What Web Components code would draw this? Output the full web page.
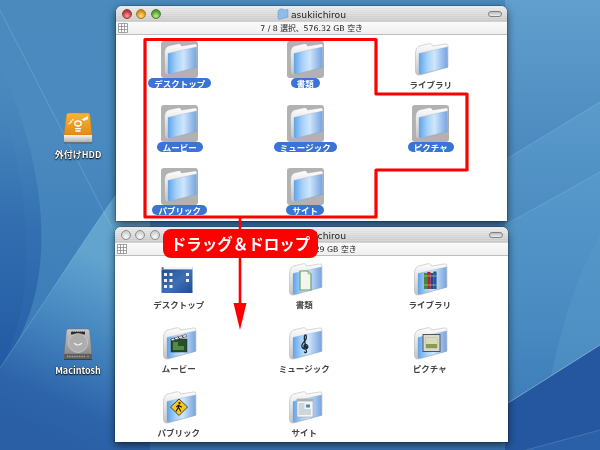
<!DOCTYPE html>
<html lang="ja"><head><meta charset="utf-8"><title>Finder</title>
<style>html,body{margin:0;padding:0;width:600px;height:450px;overflow:hidden;background:#3b79b5}</style></head>
<body>
<x-desktop>
  <x-volume slot="icons" kind="fw" label="外付けHDD" style="left:48px;top:112px"></x-volume>
  <x-volume slot="icons" kind="hd" label="Macintosh" style="left:48px;top:328px"></x-volume>
  <x-window slot="windows" active name="asukiichirou" status="7 / 8 選択、576.32 GB 空き" style="left:116px;top:6px;width:391px;height:215px;--pt:6px;--row:63.5px">
    <x-file selected label="デスクトップ"></x-file><x-file selected label="書類"></x-file><x-file label="ライブラリ"></x-file>
    <x-file selected label="ムービー"></x-file><x-file selected label="ミュージック"></x-file><x-file selected label="ピクチャ"></x-file>
    <x-file selected label="パブリック"></x-file><x-file selected label="サイト"></x-file>
  </x-window>
  <x-window slot="windows" name="asukiichirou" status="8 項目、576.29 GB 空き" style="left:115px;top:227px;width:393px;height:215px;--pt:5px;--row:64.2px">
    <x-file glyph="desktop" label="デスクトップ"></x-file><x-file glyph="doc" label="書類"></x-file><x-file glyph="books" label="ライブラリ"></x-file>
    <x-file glyph="movie" label="ムービー"></x-file><x-file glyph="clef" label="ミュージック"></x-file><x-file glyph="photo" label="ピクチャ"></x-file>
    <x-file glyph="sign" label="パブリック"></x-file><x-file glyph="web" label="サイト"></x-file>
  </x-window>
  <x-callout slot="over" text="ドラッグ＆ドロップ"></x-callout>
</x-desktop>
<script>
const CJK='"Noto Sans CJK JP","Noto Sans",sans-serif';
class XDesktop extends HTMLElement{connectedCallback(){this.attachShadow({mode:'open'}).innerHTML=`
<style>:host{display:block;position:relative;width:600px;height:450px;overflow:hidden;filter:blur(.3px)}
svg.w{display:block;position:absolute;inset:0}</style>
<svg class="w" width="600" height="450" viewBox="0 0 600 450">
<defs>
<linearGradient id="b" x1="0" y1="0" x2="0" y2="1"><stop offset="0" stop-color="#4a8abd"/><stop offset=".3" stop-color="#4a8abf"/><stop offset=".6" stop-color="#3f80ba"/><stop offset="1" stop-color="#3a76b4"/></linearGradient>
<linearGradient id="d" x1="0" y1="0" x2="0" y2="1"><stop offset="0" stop-color="#3d7ab4" stop-opacity="0"/><stop offset=".55" stop-color="#2e69ad"/><stop offset="1" stop-color="#2056a2"/></linearGradient>
<linearGradient id="l" gradientUnits="userSpaceOnUse" x1="125" y1="270" x2="50" y2="435"><stop offset="0" stop-color="#62a4ce"/><stop offset=".4" stop-color="#4687c0"/><stop offset=".8" stop-color="#2e65aa"/><stop offset="1" stop-color="#2a5fa6"/></linearGradient>
<linearGradient id="r0" x1="0" y1="0" x2="0" y2="1"><stop offset="0" stop-color="#619fce"/><stop offset="1" stop-color="#4a88be"/></linearGradient>
<linearGradient id="r1" x1="0" y1="0" x2="0" y2="1"><stop offset="0" stop-color="#5a9bcb"/><stop offset="1" stop-color="#4b8bc0"/></linearGradient>
<linearGradient id="r2" x1="0" y1="0" x2="0" y2="1"><stop offset="0" stop-color="#5799ca"/><stop offset=".6" stop-color="#4a8cc2"/><stop offset="1" stop-color="#3d7dba"/></linearGradient>
</defs>
<rect width="600" height="450" fill="url(#b)"/>
<path d="M505 0H600V102L505 160Z" fill="url(#r0)"/>
<path d="M0 65C48 170 62 290 0 368Z" fill="url(#d)" opacity=".75"/>
<path d="M0 100C30 190 40 300 0 368Z" fill="url(#d)" opacity=".6"/>
<path d="M0 368C40 310 80 245 116 195L150 170V450H0Z" fill="url(#l)"/>
<path d="M505 160L600 102V172L505 225Z" fill="url(#r1)"/>
<path d="M505 225L600 172V345L505 405Z" fill="url(#r2)"/>
<path d="M550 380C565 310 580 270 600 235V345Z" fill="#5a9ccb" opacity=".4"/>
<path d="M505 405L600 345V450H505Z" fill="#24579f"/>
<path d="M526 450L600 430V450Z" fill="#2a60a8"/>
<g fill="none" stroke="#fff" stroke-opacity=".2" stroke-width=".8">
<path d="M0 10L112 228"/><path d="M0 368C40 310 80 245 116 195"/><path d="M505 160L600 102"/><path d="M505 225L600 172"/><path d="M505 405L600 345" stroke-opacity=".45"/><path d="M526 450L600 430"/>
</g></svg>
<slot name="icons"></slot><slot name="windows"></slot><slot name="over"></slot>`;}}
customElements.define('x-desktop',XDesktop);

class XVolume extends HTMLElement{connectedCallback(){
const kind=this.getAttribute('kind');
const fw=`<svg width="60" height="32" viewBox="0 0 30 32" preserveAspectRatio="xMidYMid"><defs><linearGradient id="o" x1="0" y1="0" x2="0" y2="1"><stop offset="0" stop-color="#f8b43c"/><stop offset="1" stop-color="#e58a12"/></linearGradient><linearGradient id="s" x1="0" y1="0" x2="0" y2="1"><stop offset="0" stop-color="#f4f4f4"/><stop offset="1" stop-color="#a8a8a8"/></linearGradient></defs>
<path d="M3.5 2.5Q3.7 1 5.5 1H25Q26.6 1 26.8 2.5L29 23H1Z" fill="url(#o)" stroke="#c67a12" stroke-width=".4"/><path d="M1 23H29V29Q29 31 27 31H3Q1 31 1 29Z" fill="url(#s)"/><rect x="1" y="30" width="28" height="1.5" fill="#555" opacity=".7"/><circle cx="25" cy="28" r=".7" fill="#c9b43c"/>
<g fill="none" stroke="#fff" stroke-width="1.3"><ellipse cx="15" cy="11.5" rx="3.2" ry="2.5"/><path d="M12 16.7H18M12.5 19H17.5"/><path d="M7.5 9.5L11 7M5.5 12L8.5 10" stroke-dasharray="1.4 .7"/></g><path d="M18.5 7.5L22 5.5L25 4L25 7L21 9Z" fill="#fff"/></svg>`;
const hd=`<svg width="60" height="32" viewBox="0 0 30 32"><defs><linearGradient id="g" x1="0" y1="0" x2="0" y2="1"><stop offset="0" stop-color="#c8c8c8"/><stop offset="1" stop-color="#8e8e8e"/></linearGradient></defs>
<path d="M3.5 2.5Q4 1 5.5 1H24.5Q26 1 26.5 2.5L29 26H1Z" fill="url(#g)" stroke="#666" stroke-width=".4"/><rect x="8" y="3.5" width="14" height="3" fill="#2c2c2c"/><path d="M8 3.5h14" stroke="#bbb" stroke-width=".6" stroke-dasharray="1 1"/>
<circle cx="15" cy="15" r="9.5" fill="#adadad" stroke="#d8d8d8" stroke-width=".6"/><path d="M11 15Q15 19 19 15" fill="none" stroke="#eee" stroke-width="1.1"/>
<rect x="1" y="26" width="28" height="5" fill="#5d5d5d"/><path d="M4 28.5H22" stroke="#aaa" stroke-width="1.6" stroke-dasharray="1 .7"/><circle cx="25" cy="28.5" r=".7" fill="#c9c93c"/><rect x="1" y="31" width="28" height=".8" fill="#333"/></svg>`;
this.attachShadow({mode:'open'}).innerHTML=`<style>:host{display:flex;position:absolute;flex-direction:column;align-items:center;width:60px;gap:5px}
svg{display:block}span{font:700 9px/11px ${CJK};color:#fff;text-shadow:0 1px 1.5px #000,0 0 1px #000;white-space:nowrap}</style>${kind==='fw'?fw:hd}<span>${this.getAttribute('label')}</span>`;}}
customElements.define('x-volume',XVolume);

class XWindow extends HTMLElement{connectedCallback(){
const a=this.hasAttribute('active');
const L=(c1,c2,b)=>`<i style="background:radial-gradient(circle at 50% 75%,${c2},${c1} 70%);border-color:${b}"></i>`;
const lights=a?L('#c23030','#f7a0a0','#8c3a3a')+L('#d98a10','#ffe27a','#9a7a30')+L('#4b9a25','#c4ee90','#4a7c34'):L('#d0d0d0','#fafafa','#8e8e8e').repeat(3);
this.attachShadow({mode:'open'}).innerHTML=`<style>
:host{display:flex;position:absolute;flex-direction:column;border-radius:6px 6px 0 0;background:#fff;box-shadow:0 0 0 .5px rgba(0,0,0,.3),0 3px 9px rgba(0,0,0,.6);overflow:hidden;font-family:"DejaVu Sans",${CJK}}
header{flex:none;height:16px;display:flex;align-items:center;padding:0 5px 0 6px;background:repeating-linear-gradient(0deg,rgba(255,255,255,.15) 0 1px,rgba(0,0,0,.015) 1px 2px),linear-gradient(#ececec,#c9c9c9);position:relative}
.l{display:flex;gap:4.4px}i{display:block;width:10px;height:10px;box-sizing:border-box;border-radius:50%;border:.5px solid}
.t{position:absolute;left:0;right:0;top:0;height:16px;display:flex;justify-content:center;align-items:center;gap:2px;font-size:9.2px;color:#222}
.z{margin-left:auto;width:14px;height:6px;border:1px solid #808080;border-radius:4px;background:linear-gradient(#bbb,#eee);box-sizing:border-box;position:relative}
.s{flex:none;height:13px;display:flex;align-items:center;position:relative;background:linear-gradient(#fafafa,#efefef);border-bottom:1px solid #bdbdbd;box-sizing:border-box}
.s svg{margin-left:2px}.s span{position:absolute;left:0;right:0;text-align:center;font:7.8px/13px "DejaVu Sans",${CJK};color:#222}
main{flex:1;display:grid;grid-template-columns:repeat(3,125.5px);grid-auto-rows:var(--row);justify-content:start;padding:var(--pt) 0 0 1px;position:relative;box-sizing:border-box}
.r{position:absolute;right:0;bottom:0}
</style>
<header><div class="l">${lights}</div><div class="t"><svg width="12" height="12" viewBox="0 0 12 12"><path d="M1 3L3 1H6L7 2L11 1.5V9L2 11.5L1 10Z" fill="#8fbdea" stroke="#6c8fb5" stroke-width=".5"/></svg><b style="font-weight:400">${this.getAttribute('name')}</b></div><div class="z"></div></header>
<div class="s"><svg width="10" height="10" viewBox="0 0 10 10"><path d="M.5.5h9v9h-9zM.5 3.5h9M.5 6.5h9M3.5.5v9M6.5.5v9" fill="#fff" stroke="#8c8c8c" stroke-width=".8"/></svg><span>${this.getAttribute('status')}</span></div>
<main><slot></slot><svg class="r" width="11" height="11" viewBox="0 0 11 11"><path d="M.5 11V.5H11" fill="#f4f4f4" stroke="#d4d4d4"/><path d="M3 10L10 3M6 10L10 6M8.5 10L10 8.5" stroke="#777" stroke-width=".9"/></svg></main>`;}}
customElements.define('x-window',XWindow);

const GLYPHS={
doc:`<path d="M14 10H22L25 13V29H14Z" fill="#f4f6ee" stroke="#6aa066" stroke-width="1.2"/><path d="M22 10V13H25" fill="#cfd8c0" stroke="#6aa066" stroke-width=".5"/>`,
books:`<rect x="13" y="12" width="3.2" height="16" fill="#3f8a3c"/><rect x="16.2" y="11" width="3.4" height="17" fill="#b82036"/><rect x="19.6" y="12" width="2.6" height="16" fill="#2a3f8f"/><rect x="22.2" y="10.5" width="3.4" height="17.5" fill="#24589a"/><path d="M13 15H25.5M13 24H25.5" stroke="#d8cc70" stroke-width=".7"/>`,
movie:`<rect x="11" y="14" width="16" height="13" fill="#26502a" stroke="#222" stroke-width=".5"/><path d="M13 17H18V21H24V25H13Z" fill="#5f9a4c" opacity=".8"/><path d="M11 14L26 9.5L27 11.5L11.5 16Z" fill="#eee" stroke="#222" stroke-width=".5"/><path d="M14 13L15.5 15M18 11.8L19.5 13.8M22 10.7L23.5 12.7" stroke="#222" stroke-width="1"/>`,
clef:`<path d="M19.5 26C21 26 21.3 24.5 20.3 23.5C19 22.6 18 24.3 19 25C17 24 18 21.5 19.5 21.5C21.5 21.5 22.5 23.5 21.5 25C20.5 26.5 17 26.5 16 24C15 21 18 19 19.5 17C20.8 15 20.5 12 19.5 12C18.5 12 18 14 18.5 17L20.5 28.5C20.7 30 18.5 30 18.5 28.6" transform="translate(0 -2)" fill="none" stroke="#1f2a36" stroke-width="1.3"/>`,
photo:`<rect x="12" y="9.5" width="17" height="17" fill="#d9d9d0" stroke="#555" stroke-width="1"/><rect x="15" y="13" width="11" height="10" fill="#fff" stroke="#888" stroke-width=".4"/><path d="M15 19H26V23H15Z" fill="#8a9a50"/><path d="M15 13H26V19H15Z" fill="#d8dcb8"/>`,
sign:`<path d="M19 10L27.5 18L19 26.5L10.5 18Z" fill="#f6c81e" stroke="#333" stroke-width=".9"/><circle cx="19.5" cy="14" r="1.1" fill="#111"/><path d="M19.3 15.5L18 19L16 22.5M18.7 18.5L20.8 22.5M18.8 16.5L21.8 18.2M18.5 16.2L16.4 18" fill="none" stroke="#111" stroke-width="1.1"/>`,
web:`<rect x="11" y="10" width="16" height="18" fill="#f3f5f7" stroke="#8f9aa5" stroke-width=".5"/><rect x="11" y="10" width="16" height="2.4" fill="#a8b2bc"/><rect x="20" y="15.5" width="4" height="3" fill="#4c8ab0"/><path d="M12.5 15H18.5M12.5 17H18.5M12.5 19H18.5M12.5 21H25M12.5 23H25M12.5 25H25" stroke="#9aa4ad" stroke-width=".8"/>`
};
class XFile extends HTMLElement{connectedCallback(){
const g=this.getAttribute('glyph'),sel=this.hasAttribute('selected');
const folder=`<svg width="37" height="37" viewBox="0 0 37 37"><defs>
<linearGradient id="k" x1="0" y1="0" x2="0" y2="1"><stop offset="0" stop-color="#fdfdfd"/><stop offset="1" stop-color="#c4c4c4"/></linearGradient>
<linearGradient id="c" x1="0" y1="0" x2="1" y2="0"><stop offset="0" stop-color="#5ea4ec"/><stop offset=".3" stop-color="#a8d2f8"/><stop offset=".55" stop-color="#cfe6fb"/><stop offset=".8" stop-color="#9cc0ee"/><stop offset="1" stop-color="#7aa4dc"/></linearGradient></defs>
<path d="M3.5 13C3.5 7 6 5.2 9 4.6L17 2.8C19 2.4 20 3.2 20.5 5L33.5 3C35 2.8 36 3.4 36 5V26L8 34C5 34.5 3.5 33 3.5 30Z" fill="url(#k)" stroke="#999" stroke-width=".4"/>
<path d="M7 12.4L35.5 6V26.4L9 33C7.6 33.3 7 32.6 7 31.4Z" fill="url(#c)" stroke="#7f9cc4" stroke-width=".3"/>${g&&g!=='desktop'?GLYPHS[g]:''}</svg>`;
const desk=`<svg width="37" height="37" viewBox="0 0 37 37"><defs><linearGradient id="q" x1="0" y1="0" x2="1" y2="1"><stop offset="0" stop-color="#1f4a8c"/><stop offset=".55" stop-color="#3f70b4"/><stop offset="1" stop-color="#1d4c8f"/></linearGradient></defs>
<rect x="1.5" y="6" width="31" height="26" fill="url(#q)"/><rect x="1.5" y="6" width="31" height="2.4" fill="#f4f4f4"/><rect x="2" y="6.3" width="1.6" height="1.8" fill="#2a5aa8"/>
<g fill="#eef2f8"><rect x="4" y="12" width="3" height="3"/><rect x="9.5" y="12" width="3" height="3"/><rect x="4" y="18" width="3" height="3"/><rect x="9.5" y="18" width="3" height="3"/><rect x="4" y="24" width="3" height="3"/><rect x="9.5" y="24" width="3" height="3"/><rect x="26" y="12" width="3" height="3"/><rect x="26" y="18" width="3" height="3"/></g></svg>`;
this.attachShadow({mode:'open'}).innerHTML=`<style>:host{display:flex;flex-direction:column;align-items:center;gap:0}
.b{width:37px;height:37px;border-radius:3px;${sel?'background:#b2b2b2;':''}}svg{display:block}
.n{margin-top:${sel?'0':'1px'};font:700 8.5px/10.4px ${CJK};white-space:nowrap;padding:0 6px;border-radius:6px;${sel?'background:#3a74d4;color:#fff':'color:#444'}}</style>
<div class="b">${g==='desktop'?desk:folder}</div><div class="n">${this.getAttribute('label')}</div>`;}}
customElements.define('x-file',XFile);

class XCallout extends HTMLElement{connectedCallback(){
this.attachShadow({mode:'open'}).innerHTML=`<style>:host{display:block;position:absolute;inset:0;pointer-events:none}
svg{position:absolute;left:0;top:0}
div{position:absolute;left:163px;top:229px;width:155px;height:29px;display:flex;align-items:center;justify-content:center;background:#f00;border-radius:8px;color:#fff;font:700 15.5px/29px ${CJK};white-space:nowrap}</style>
<svg width="600" height="450"><path d="M145 39.5H376V94H467V170H376V217H145Z" fill="none" stroke="#f00" stroke-width="3.2" stroke-linejoin="round"/>
<path d="M240 217V306" stroke="#f00" stroke-width="2.6"/><path d="M233.5 303H246.5L240 330Z" fill="#f00"/></svg>
<div>${this.getAttribute('text')}</div>`;}}
customElements.define('x-callout',XCallout);
</script>
</body></html>
